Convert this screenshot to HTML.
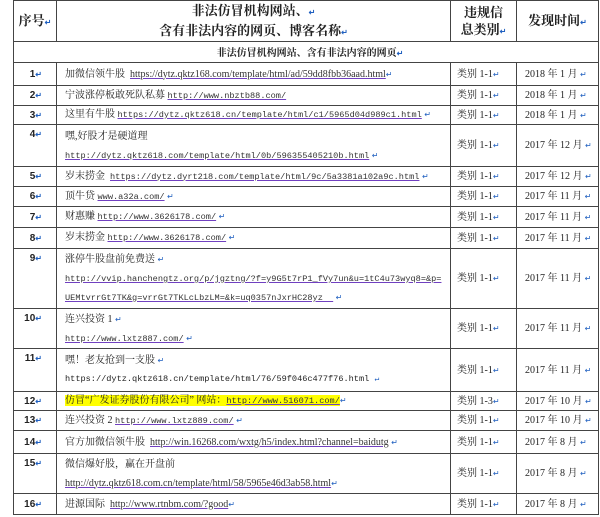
<!DOCTYPE html>
<html><head><meta charset="utf-8"><style>
body{margin:0;width:600px;height:517px;background:#fff;overflow:hidden;font-family:"Liberation Serif","Noto Serif CJK SC",serif;color:#222}
table{position:absolute;left:13px;top:0;width:585px;border-collapse:collapse;table-layout:fixed}
td{border:1px solid #444;padding:0 0 0 8px;font-size:10px;line-height:13px;vertical-align:middle;white-space:nowrap;overflow:hidden}
td.n{text-align:right;padding:3px 14px 0 0;font-weight:bold;font-family:"Liberation Sans",sans-serif;vertical-align:top}
td.m{vertical-align:middle;padding-top:0}
td.c{padding-left:6px}
td.t{padding-left:8px}
a{color:#333;text-decoration:underline;text-decoration-color:#7040c0;font-family:"Liberation Mono",monospace;font-size:8.6px}
a.s{font-family:"Liberation Serif",serif;font-size:10px}
.r{color:#2060c0;font-size:8px}
th{border:1px solid #444;padding:0;font-family:"Noto Serif CJK SC",serif;font-weight:bold;font-size:13px;color:#222;line-height:17px;overflow:hidden}
.l2 div{line-height:19px;height:19px}
</style></head><body>
<table>
<colgroup><col style="width:43px"><col style="width:394px"><col style="width:66px"><col style="width:82px"></colgroup>
<tr style="height:41px"><th>序号<span class="r">↵</span></th><th>非法仿冒机构网站、<span class="r">↵</span><br>含有非法内容的网页、博客名称<span class="r">↵</span></th><th>违规信<br>息类别<span class="r">↵</span></th><th>发现时间<span class="r">↵</span></th></tr>
<tr style="height:21px"><td colspan="4" style="text-align:center;font-weight:bold;font-family:'Noto Serif CJK SC',serif;font-size:10px">非法仿冒机构网站、含有非法内容的网页<span class="r">↵</span></td></tr>
<tr style="height:23px"><td class="n m">1<span class="r">↵</span></td><td>加微信领牛股 &nbsp;<a class="s">https://dytz.qktz168.com/template/html/ad/59dd8fbb36aad.html</a><span class="r">↵</span></td><td class="c">类别 1-1<span class="r">↵</span></td><td class="t">2018 年 1 月 <span class="r">↵</span></td></tr>
<tr style="height:20px"><td class="n m">2<span class="r">↵</span></td><td>宁波涨停板敢死队私募 <a>http://www.nbztb88.com/</a></td><td class="c">类别 1-1<span class="r">↵</span></td><td class="t">2018 年 1 月 <span class="r">↵</span></td></tr>
<tr style="height:19px"><td class="n m">3<span class="r">↵</span></td><td>这里有牛股 <a>https://dytz.qktz618.cn/template/html/c1/5965d04d989c1.html</a> <span class="r">↵</span></td><td class="c">类别 1-1<span class="r">↵</span></td><td class="t">2018 年 1 月 <span class="r">↵</span></td></tr>
<tr style="height:42px" class="l2"><td class="n">4<span class="r">↵</span></td><td><div>嘿,好股才是硬道理</div><div><a>http://dytz.qktz618.com/template/html/0b/596355405210b.html</a> <span class="r">↵</span></div></td><td class="c">类别 1-1<span class="r">↵</span></td><td class="t">2017 年 12 月 <span class="r">↵</span></td></tr>
<tr style="height:20px"><td class="n m">5<span class="r">↵</span></td><td>岁末捞金 &nbsp;<a>https://dytz.dyrt218.com/template/html/9c/5a3381a102a9c.html</a> <span class="r">↵</span></td><td class="c">类别 1-1<span class="r">↵</span></td><td class="t">2017 年 12 月 <span class="r">↵</span></td></tr>
<tr style="height:20px"><td class="n m">6<span class="r">↵</span></td><td>顶牛贷 <a>www.a32a.com/</a> <span class="r">↵</span></td><td class="c">类别 1-1<span class="r">↵</span></td><td class="t">2017 年 11 月 <span class="r">↵</span></td></tr>
<tr style="height:21px"><td class="n m">7<span class="r">↵</span></td><td>财惠赚 <a>http://www.3626178.com/</a> <span class="r">↵</span></td><td class="c">类别 1-1<span class="r">↵</span></td><td class="t">2017 年 11 月 <span class="r">↵</span></td></tr>
<tr style="height:21px"><td class="n m">8<span class="r">↵</span></td><td>岁末捞金 <a>http://www.3626178.com/</a> <span class="r">↵</span></td><td class="c">类别 1-1<span class="r">↵</span></td><td class="t">2017 年 11 月 <span class="r">↵</span></td></tr>
<tr style="height:60px" class="l2"><td class="n">9<span class="r">↵</span></td><td><div>涨停牛股盘前免费送 <span class="r">↵</span></div><div><a>http://vvip.hanchengtz.org/p/jgztng/?f=y9G5t7rP1_fVy7un&amp;u=1tC4u73wyq8=&amp;p=</a></div><div><a>UEMtvrrGt7TK&amp;g=vrrGt7TKLcLbzLM=&amp;k=uq0357nJxrHC28yz &nbsp;</a> <span class="r">↵</span></div></td><td class="c">类别 1-1<span class="r">↵</span></td><td class="t">2017 年 11 月 <span class="r">↵</span></td></tr>
<tr style="height:40px" class="l2"><td class="n">10<span class="r">↵</span></td><td><div>连兴投资 1 <span class="r">↵</span></div><div><a>http://www.lxtz887.com/</a> <span class="r">↵</span></div></td><td class="c">类别 1-1<span class="r">↵</span></td><td class="t">2017 年 11 月 <span class="r">↵</span></td></tr>
<tr style="height:43px" class="l2"><td class="n">11<span class="r">↵</span></td><td><div>嘿！老友抢到一支股 <span class="r">↵</span></div><div style="font-family:'Liberation Mono',monospace;font-size:8.6px">https://dytz.qktz618.cn/template/html/76/59f046c477f76.html <span class="r">↵</span></div></td><td class="c">类别 1-1<span class="r">↵</span></td><td class="t">2017 年 11 月 <span class="r">↵</span></td></tr>
<tr style="height:19px"><td class="n m">12<span class="r">↵</span></td><td><span style="background:#ffff00">仿冒“广发证券股份有限公司” 网站：<a>http://www.516071.com/</a></span><span class="r">↵</span></td><td class="c">类别 1-3<span class="r">↵</span></td><td class="t">2017 年 10 月 <span class="r">↵</span></td></tr>
<tr style="height:20px"><td class="n m">13<span class="r">↵</span></td><td>连兴投资 2 <a>http://www.lxtz889.com/</a> <span class="r">↵</span></td><td class="c">类别 1-1<span class="r">↵</span></td><td class="t">2017 年 10 月 <span class="r">↵</span></td></tr>
<tr style="height:23px"><td class="n m">14<span class="r">↵</span></td><td>官方加微信领牛股 &nbsp;<a class="s">http://win.16268.com/wxtg/h5/index.html?channel=baidutg</a> <span class="r">↵</span></td><td class="c">类别 1-1<span class="r">↵</span></td><td class="t">2017 年 8 月 <span class="r">↵</span></td></tr>
<tr style="height:40px" class="l2"><td class="n">15<span class="r">↵</span></td><td><div>微信爆好股，赢在开盘前</div><div><a class="s">http://dytz.qktz618.com.cn/template/html/58/5965e46d3ab58.html</a><span class="r">↵</span></div></td><td class="c">类别 1-1<span class="r">↵</span></td><td class="t">2017 年 8 月 <span class="r">↵</span></td></tr>
<tr style="height:21px"><td class="n m">16<span class="r">↵</span></td><td>进源国际 &nbsp;<a class="s">http://www.rtnbm.com/?good</a><span class="r">↵</span></td><td class="c">类别 1-1<span class="r">↵</span></td><td class="t">2017 年 8 月 <span class="r">↵</span></td></tr>
</table>
</body></html>
